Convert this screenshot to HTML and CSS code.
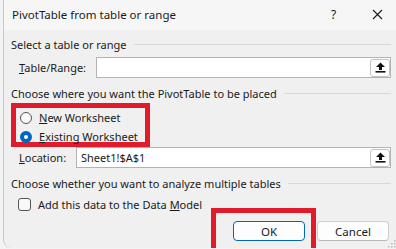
FILE: index.html
```html
<!DOCTYPE html>
<html>

<head>
    <title>PivotTable from table or range</title>
    <link rel="stylesheet" href="styles.css">
</head>

<body>

    <div class="dialog">
        <div class="titlebar">
            <span class="title">PivotTable from table or range</span>
            <span class="help">?</span>
            <span class="close">
                <svg width="11" height="11" viewBox="0 0 11 11">
                    <path d="M1 1 L10 10 M10 1 L1 10" stroke="#1a1a1a" stroke-width="1.1" fill="none" />
                </svg>
            </span>
        </div>

        <div class="content">
            <div class="group">Select a table or range</div>
            <div class="row">
                <span class="field-label table-label"><u>T</u>able/Range:</span>
                <div class="ref-input">
                    <span class="ref-value"></span>
                    <button class="collapse">
                        <svg width="11" height="11" viewBox="0 0 11 11">
                            <path d="M5.5 0.5 L10 5 H7 V8 H4 V5 H1 Z" fill="#111" />
                            <rect x="0.5" y="9" width="10" height="1.6" fill="#111" />
                        </svg>
                    </button>
                </div>
            </div>

            <div class="group">Choose where you want the PivotTable to be placed</div>
            <div class="choice-box">
                <div class="radio-row"><span class="radio"></span><span><u>N</u>ew Worksheet</span></div>
                <div class="radio-row"><span class="radio checked"></span><span><u>E</u>xisting Worksheet</span></div>
            </div>
            <div class="row">
                <span class="field-label location-label"><u>L</u>ocation:</span>
                <div class="ref-input">
                    <span class="ref-value">Sheet1!$A$1</span>
                    <button class="collapse">
                        <svg width="11" height="11" viewBox="0 0 11 11">
                            <path d="M5.5 0.5 L10 5 H7 V8 H4 V5 H1 Z" fill="#111" />
                            <rect x="0.5" y="9" width="10" height="1.6" fill="#111" />
                        </svg>
                    </button>
                </div>
            </div>

            <div class="group">Choose whether you want to analyze multiple tables</div>
            <div class="check-row">
                <span class="checkbox"></span>
                <span>Add this data to the Data <u>M</u>odel</span>
            </div>

            <div class="buttons">
                <div class="ok-wrap">
                    <button class="btn primary">OK</button>
                    <span class="mark"></span>
                </div>
                <button class="btn">Cancel</button>
            </div>
        </div>

        <svg class="grip" width="8" height="8" viewBox="0 0 8 8">
            <rect x="6" y="0" width="1.5" height="1.5" fill="#b8b8b8" />
            <rect x="3" y="3" width="1.5" height="1.5" fill="#b8b8b8" />
            <rect x="6" y="3" width="1.5" height="1.5" fill="#b8b8b8" />
            <rect x="0" y="6" width="1.5" height="1.5" fill="#b8b8b8" />
            <rect x="3" y="6" width="1.5" height="1.5" fill="#b8b8b8" />
            <rect x="6" y="6" width="1.5" height="1.5" fill="#b8b8b8" />
        </svg>
    </div>

</body>

</html>
```

FILE: styles.css
```css
body {
    margin: 0;
    width: 396px;
    height: 249px;
    overflow: hidden;
    background-color: #f3f3f3;
    font-family: 'Noto Sans', 'Open Sans', sans-serif;
    font-size: 11px;
    color: #1a1a1a;
}

.dialog {
    position: relative;
    margin-left: 3px;
    height: 248px;
    border-left: 1px solid #c9c9c9;
    border-radius: 0 0 0 8px;
    background-color: #f0f0f0;
    overflow: hidden;
}

.titlebar {
    display: flex;
    align-items: center;
    height: 29px;
    padding: 0 0 1px 8px;
    background-color: #f6f6f6;
}

.title {
    flex: 1;
    font-size: 11.5px;
}

.help {
    width: 41px;
    font-size: 12px;
}

.close {
    display: flex;
    width: 24px;
}

.content {
    padding: 0 5px 0 7px;
}

/* group heading with rule after it */
.group {
    display: flex;
    align-items: center;
    height: 16px;
    margin-top: 7px;
}

.group::after {
    content: "";
    flex: 1;
    height: 1px;
    margin-left: 7px;
    background-color: #d9d9d9;
}

.content > .group:first-child {
    margin-top: 6px;
}

.row {
    display: flex;
    align-items: center;
    padding-left: 8px;
    margin-top: 5px;
}

.choice-box + .row {
    margin-top: 0;
}

.field-label {
    flex: none;
}

.table-label {
    width: 77px;
}

.location-label {
    width: 57px;
}

.ref-input {
    flex: 1;
    display: flex;
    align-items: center;
    height: 21px;
    box-sizing: border-box;
    border: 1px solid #b3b3b3;
    background-color: white;
}

.ref-value {
    flex: 1;
    padding-left: 4px;
}

.collapse {
    display: flex;
    align-items: center;
    justify-content: center;
    width: 20px;
    height: 18px;
    padding: 0;
    border: 1px solid #c4c4c4;
    border-radius: 3px;
    background-color: white;
}

.choice-box {
    width: 139px;
    height: 44px;
    box-sizing: border-box;
    margin-top: 2px;
    border: 5px solid #e01b2b;
}

.radio-row {
    display: flex;
    align-items: center;
    gap: 7px;
    height: 19px;
    padding-left: 4px;
}

.radio {
    width: 12px;
    height: 12px;
    box-sizing: border-box;
    border: 1px solid #555;
    border-radius: 50%;
    background-color: #fafafa;
}

.radio.checked {
    border: 4px solid #0067c0;
    background-color: white;
}

.check-row {
    display: flex;
    align-items: center;
    gap: 7px;
    height: 18px;
    margin-top: 4px;
    padding-left: 7px;
}

.checkbox {
    width: 13px;
    height: 13px;
    box-sizing: border-box;
    border: 1px solid #555;
    border-radius: 3px;
    background-color: #f8f8f8;
}

.buttons {
    display: flex;
    justify-content: flex-end;
    gap: 12px;
    margin-top: 8px;
    padding-right: 2px;
}

.ok-wrap {
    position: relative;
    display: flex;
}

.btn {
    width: 72px;
    height: 20px;
    padding: 0;
    border: 1px solid #cfcfcf;
    border-bottom-color: #b8b8b8;
    border-radius: 4px;
    background-color: #fdfdfd;
    font-family: inherit;
    font-size: 11.5px;
    color: #1a1a1a;
}

.btn.primary {
    border-color: #0067c0;
}

/* red highlight laid over the OK button */
.mark {
    position: absolute;
    left: -22px;
    top: -13px;
    width: 105px;
    height: 60px;
    box-sizing: border-box;
    border: 5px solid #e01b2b;
}

.grip {
    position: absolute;
    right: 0;
    bottom: 0;
}
```
